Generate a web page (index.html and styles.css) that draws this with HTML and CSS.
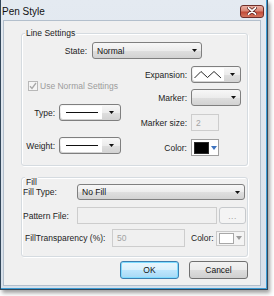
FILE: index.html
```html
<!DOCTYPE html>
<html>
<head>
<meta charset="utf-8">
<link rel="stylesheet" href="styles.css">
</head>
<body>
<div class="window">
  <div class="titlebar">
    <span class="title">Pen Style</span>
    <div class="close">
      <svg width="10" height="8" viewBox="0 0 10 8"><path d="M1.5 0.8L8.5 7.2M8.5 0.8L1.5 7.2" stroke="#5a2320" stroke-width="3.2" stroke-linecap="round"/><path d="M1.5 0.8L8.5 7.2M8.5 0.8L1.5 7.2" stroke="#fff" stroke-width="1.8" stroke-linecap="round"/></svg>
    </div>
  </div>
  <div class="client">
    <div class="group g1">
      <div class="legend l1">Line Settings</div>
      <div class="row state-row">
        <span class="lbl w65">State:</span>
        <div class="combo w110"><span class="val">Normal</span><span class="arrow"><svg width="5" height="3"><path d="M0 0H5L2.5 3Z"/></svg></span></div>
      </div>
      <div class="cols">
        <div class="col left">
          <div class="row check-row">
            <span class="check"><svg width="8" height="8" viewBox="0 0 8 8"><path d="M1 4.2L3 6.5L7 1" fill="none" stroke="#a8a8a8" stroke-width="1.3"/></svg></span>
            <span class="dis">Use Normal Settings</span>
          </div>
          <div class="row type-row">
            <span class="lbl w33">Type:</span>
            <div class="combo od w62"><span class="val"><span class="line"></span></span><span class="arrow"><svg width="5" height="3"><path d="M0 0H5L2.5 3Z"/></svg></span></div>
          </div>
          <div class="row weight-row">
            <span class="lbl w33">Weight:</span>
            <div class="combo od w62"><span class="val"><span class="line"></span></span><span class="arrow"><svg width="5" height="3"><path d="M0 0H5L2.5 3Z"/></svg></span></div>
          </div>
        </div>
        <div class="col right">
          <div class="row exp-row">
            <span class="lbl w52">Expansion:</span>
            <div class="combo od w50"><span class="val"><svg width="29" height="9" viewBox="0 0 29 9"><path d="M0.5 8L7 1.5L13.5 7.5L20 1.5L27 8" fill="none" stroke="#111" stroke-width="0.9"/></svg></span><span class="arrow"><svg width="5" height="3"><path d="M0 0H5L2.5 3Z"/></svg></span></div>
          </div>
          <div class="row marker-row">
            <span class="lbl w52">Marker:</span>
            <div class="combo w50"><span class="val"></span><span class="arrow"><svg width="5" height="3"><path d="M0 0H5L2.5 3Z"/></svg></span></div>
          </div>
          <div class="row size-row">
            <span class="lbl w52">Marker size:</span>
            <div class="tbox w28">2</div>
          </div>
          <div class="row color-row">
            <span class="lbl w52">Color:</span>
            <div class="swatch w28"><span class="chip black"></span><svg width="6" height="4"><path d="M0 0H6L3 4Z" fill="#3f74bf"/></svg></div>
          </div>
        </div>
      </div>
    </div>
    <div class="group g2">
      <div class="legend l2">Fill</div>
      <div class="row filltype-row">
        <span class="lbl2 w55">Fill Type:</span>
        <div class="combo w168"><span class="val">No Fill</span><span class="arrow"><svg width="5" height="3"><path d="M0 0H5L2.5 3Z"/></svg></span></div>
      </div>
      <div class="row pattern-row">
        <span class="lbl2 w55">Pattern File:</span>
        <div class="tbox w140"></div>
        <div class="dots">...</div>
      </div>
      <div class="row trans-row">
        <span class="lbl2 w90 pl3">FillTransparency (%):</span>
        <div class="tbox w73 h18">50</div>
        <span class="clbl">Color:</span>
        <div class="swatch light"><span class="chip white"></span><svg width="6" height="4"><path d="M0 0H6L3 4Z" fill="#9a9a9a"/></svg></div>
      </div>
    </div>
    <div class="buttons">
      <div class="btn default">OK</div>
      <div class="btn">Cancel</div>
    </div>
  </div>
</div>
</body>
</html>
```

FILE: styles.css
```css
html, body {
  margin: 0;
  padding: 0;
}
body {
  width: 274px;
  height: 296px;
  overflow: hidden;
  background: #ffffff;
  font-family: "Liberation Sans", Arial, sans-serif;
  font-size: 8.5px;
  color: #1c1c1c;
}
.window {
  box-sizing: border-box;
  width: 268px;
  height: 290px;
  border: 1px solid #33475a;
  border-top: 0;
  background: linear-gradient(#e4eaf1, #d7e0ea);
  box-shadow: inset -1px -1px 0 #3c9cd4, 2px 3px 4px rgba(0, 0, 0, 0.38);
  display: flex;
  flex-direction: column;
}
.titlebar {
  height: 20px;
  flex: none;
  display: flex;
  align-items: center;
  padding-top: 2px;
  box-sizing: border-box;
  padding-left: 1px;
}
.title {
  font-size: 10px;
  color: #111;
}
.close {
  margin-left: auto;
  margin-right: 3px;
  width: 24px;
  height: 13px;
  box-sizing: border-box;
  border: 1px solid #6e2f2a;
  border-radius: 3px;
  background: linear-gradient(#eab0a3 0%, #d98674 45%, #c24b38 55%, #d4765f 100%);
  display: flex;
  align-items: center;
  justify-content: center;
}
.client {
  flex: 1;
  margin: 0 6px 3px 2px;
  box-sizing: border-box;
  border: 1px solid #b3bfcc;
  background: #f0f0f0;
}
.group {
  box-sizing: border-box;
  width: 227px;
  margin-left: 17px;
  border: 1px solid #d5dbe0;
  border-radius: 3px;
  box-shadow: inset 1px 1px 0 #ffffff, 1px 1px 0 #ffffff;
}
.g1 {
  margin-top: 12px;
  height: 133px;
}
.g2 {
  margin-top: 11px;
  height: 80px;
}
.legend {
  width: fit-content;
  background: #f0f0f0;
  padding: 0 1px;
  margin-left: 3px;
  line-height: 11px;
}
.l1 {
  margin-top: -6px;
}
.l2 {
  margin-top: -1px;
  line-height: 10px;
}
.row {
  display: flex;
  align-items: center;
}
.lbl {
  display: flex;
  justify-content: flex-end;
  white-space: nowrap;
  margin-right: 4px;
  flex: none;
}
.lbl2 {
  white-space: nowrap;
  padding-left: 1px;
  box-sizing: border-box;
  flex: none;
}
.pl3 { padding-left: 3px; }
.w65 { width: 65px; margin-right: 5px; }
.w33 { width: 33px; }
.w52 { width: 52px; }
.w55 { width: 55px; }
.w90 { width: 90px; }
.w110 { width: 110px; }
.w62 { width: 62px; }
.w50 { width: 50px; }
.w28 { width: 28px; }
.w168 { width: 168px; }
.w140 { width: 140px; }
.w73 { width: 73px; }
.state-row {
  margin-top: 3px;
}
.combo {
  box-sizing: border-box;
  height: 17px;
  flex: none;
  border: 1px solid #7f7f7f;
  border-radius: 3px;
  background: linear-gradient(#f7f7f7 0%, #ececec 50%, #dfdfdf 51%, #d2d2d2 100%);
  display: flex;
  align-items: center;
}
.combo .val {
  padding-left: 4px;
  color: #111;
}
.combo .arrow {
  margin-left: auto;
  width: 14px;
  display: flex;
  align-items: center;
  justify-content: center;
}
.combo .arrow svg {
  fill: #111;
}
.combo.od .val {
  align-self: stretch;
  margin: 1px 0 1px 1px;
  padding-left: 0;
  flex: 1;
  background: #ffffff;
  display: flex;
  align-items: center;
  justify-content: center;
  border-radius: 2px 0 0 2px;
}
.line {
  width: 32px;
  height: 1px;
  background: #111;
}
.combo.w62 .arrow { width: 18px; }
.combo.w50.od .arrow { width: 16px; }
.cols {
  display: flex;
  justify-content: space-between;
}
.col {
  display: flex;
  flex-direction: column;
}
.left {
  width: 100px;
}
.right {
  margin-right: 6px;
}
.check-row {
  margin-top: 22px;
  padding-left: 6px;
  height: 10px;
}
.check {
  box-sizing: border-box;
  width: 10px;
  height: 10px;
  border: 1px solid #b8b8b8;
  background: #f5f5f5;
  margin-right: 2px;
  display: flex;
  align-items: center;
  justify-content: center;
}
.dis {
  color: #9c9c9c;
  white-space: nowrap;
}
.type-row { margin-top: 13px; }
.weight-row { margin-top: 16px; }
.exp-row { margin-top: 7px; }
.marker-row { margin-top: 6px; }
.size-row { margin-top: 8px; }
.color-row { margin-top: 8px; }
.tbox {
  box-sizing: border-box;
  height: 17px;
  flex: none;
  border: 1px solid #cdcdcd;
  background: #f0f0f0;
  color: #a3a3a3;
  padding-left: 4px;
  display: flex;
  align-items: center;
}
.h18 { height: 18px; }
.swatch {
  box-sizing: border-box;
  height: 17px;
  flex: none;
  border: 1px solid #9f9f9f;
  background: #ffffff;
  display: flex;
  align-items: center;
  padding-left: 2px;
  gap: 2px;
}
.chip {
  box-sizing: border-box;
  width: 15px;
  height: 12px;
}
.chip.black {
  background: #000;
  border: 1px solid #2a2a2a;
}
.swatch.light {
  width: 29px;
  height: 15px;
  margin-left: 2px;
  border-color: #c9c9c9;
  background: #f4f4f4;
}
.chip.white {
  background: #fff;
  border: 1px solid #a8a8a8;
  height: 11px;
}
.filltype-row {
  margin-top: -3px;
}
.filltype-row .combo {
  height: 16px;
}
.pattern-row {
  margin-top: 7px;
}
.dots {
  box-sizing: border-box;
  width: 27px;
  height: 17px;
  margin-left: 2px;
  border: 1px solid #c6c9cc;
  border-radius: 3px;
  background: #f4f4f4;
  color: #a0a0a0;
  display: flex;
  align-items: center;
  justify-content: center;
  letter-spacing: 0.5px;
}
.trans-row {
  margin-top: 5px;
}
.clbl {
  margin-left: 6px;
}
.buttons {
  display: flex;
  justify-content: flex-end;
  gap: 10px;
  margin-top: 4px;
  margin-right: 12px;
}
.btn {
  box-sizing: border-box;
  width: 59px;
  height: 18px;
  border: 1px solid #707070;
  border-radius: 3px;
  background: linear-gradient(#f2f2f2 0%, #ebebeb 50%, #dddddd 51%, #cfcfcf 100%);
  display: flex;
  align-items: center;
  justify-content: center;
  color: #111;
}
.btn.default {
  border-color: #3c7fb1;
  box-shadow: inset 0 0 0 1px #7fdcff;
  background: linear-gradient(#eaf6fd 0%, #d9f0fc 50%, #bee6fd 51%, #a7d9f5 100%);
}
```
